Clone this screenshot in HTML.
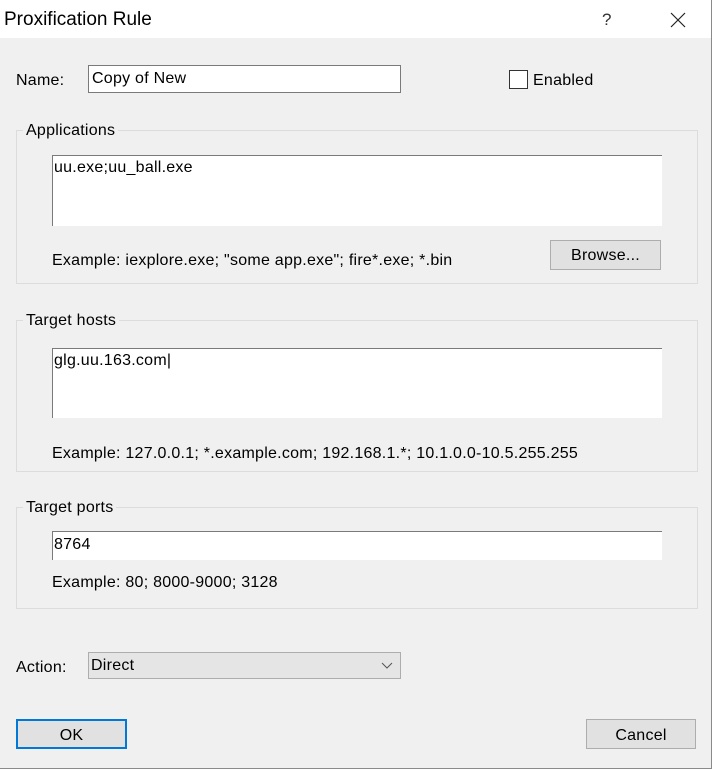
<!DOCTYPE html>
<html><head><style>
*{margin:0;padding:0;box-sizing:border-box}
body{width:715px;height:772px;background:#fff;position:relative;overflow:hidden;font-family:"Liberation Sans",sans-serif;font-size:16px;letter-spacing:0.25px;color:#000}
.a{position:absolute}
#dlg{left:0;top:0;width:712px;height:769px;background:#f0f0f0;border-right:1px solid #8a8a8a;border-bottom:1px solid #8a8a8a}
#title{left:0;top:0;width:711px;height:38px;background:#fff}
.grp{border:1px solid #dcdcdc}
.leg{background:#f0f0f0;padding:0 3px}
.btn{background:#e1e1e1;border:1px solid #adadad;text-align:center}
</style></head><body>
<div class="a" id="dlg"></div>
<div class="a" id="title"></div>
<div class="a" style="left:4px;top:9px;font-size:19px;letter-spacing:0">Proxification Rule</div>
<div class="a" style="left:602px;top:10px;font-size:17px;color:#333">?</div>
<svg class="a" style="left:670px;top:12px" width="16" height="16"><path d="M1 1L15 15M15 1L1 15" stroke="#222" stroke-width="1.2"/></svg>

<div class="a" style="left:16px;top:72px">Name:</div>
<div class="a" style="left:88px;top:65px;width:313px;height:28px;background:#fff;border:1px solid #7a7a7a;padding:4px 3px">Copy of New</div>
<div class="a" style="left:509px;top:70px;width:19px;height:19px;background:#fff;border:1px solid #333"></div>
<div class="a" style="left:533px;top:72px">Enabled</div>

<div class="a grp" style="left:16px;top:130px;width:682px;height:154px"></div>
<div class="a leg" style="left:23px;top:122px">Applications</div>
<div class="a" style="left:52px;top:155px;width:610px;height:71px;background:#fff;border-top:1px solid #7a7a7a;border-left:1px solid #7a7a7a;padding:3px 1px">uu.exe;uu_ball.exe</div>
<div class="a" style="left:52px;top:252px">Example: iexplore.exe; "some app.exe"; fire*.exe; *.bin</div>
<div class="a btn" style="left:550px;top:240px;width:111px;height:30px;padding-top:6px">Browse...</div>

<div class="a grp" style="left:16px;top:320px;width:682px;height:152px"></div>
<div class="a leg" style="left:23px;top:312px">Target hosts</div>
<div class="a" style="left:52px;top:348px;width:610px;height:70px;background:#fff;border-top:1px solid #7a7a7a;border-left:1px solid #7a7a7a;padding:3px 1px">glg.uu.163.com|</div>
<div class="a" style="left:52px;top:445px">Example: 127.0.0.1; *.example.com; 192.168.1.*; 10.1.0.0-10.5.255.255</div>

<div class="a grp" style="left:16px;top:507px;width:682px;height:102px"></div>
<div class="a leg" style="left:23px;top:499px">Target ports</div>
<div class="a" style="left:52px;top:531px;width:610px;height:29px;background:#fff;border-top:1px solid #7a7a7a;border-left:1px solid #7a7a7a;padding:4px 1px">8764</div>
<div class="a" style="left:52px;top:574px">Example: 80; 8000-9000; 3128</div>

<div class="a" style="left:16px;top:659px">Action:</div>
<div class="a" style="left:88px;top:652px;width:313px;height:27px;background:#e5e5e5;border:1px solid #adadad;padding:4px 2px">Direct</div>
<svg class="a" style="left:381px;top:662px" width="12" height="8"><path d="M1 1L6 6L11 1" stroke="#555" fill="none"/></svg>

<div class="a btn" style="left:16px;top:719px;width:111px;height:30px;border:2px solid #0078d7;padding-top:6px">OK</div>
<div class="a btn" style="left:586px;top:719px;width:110px;height:30px;padding-top:7px">Cancel</div>
</body></html>
